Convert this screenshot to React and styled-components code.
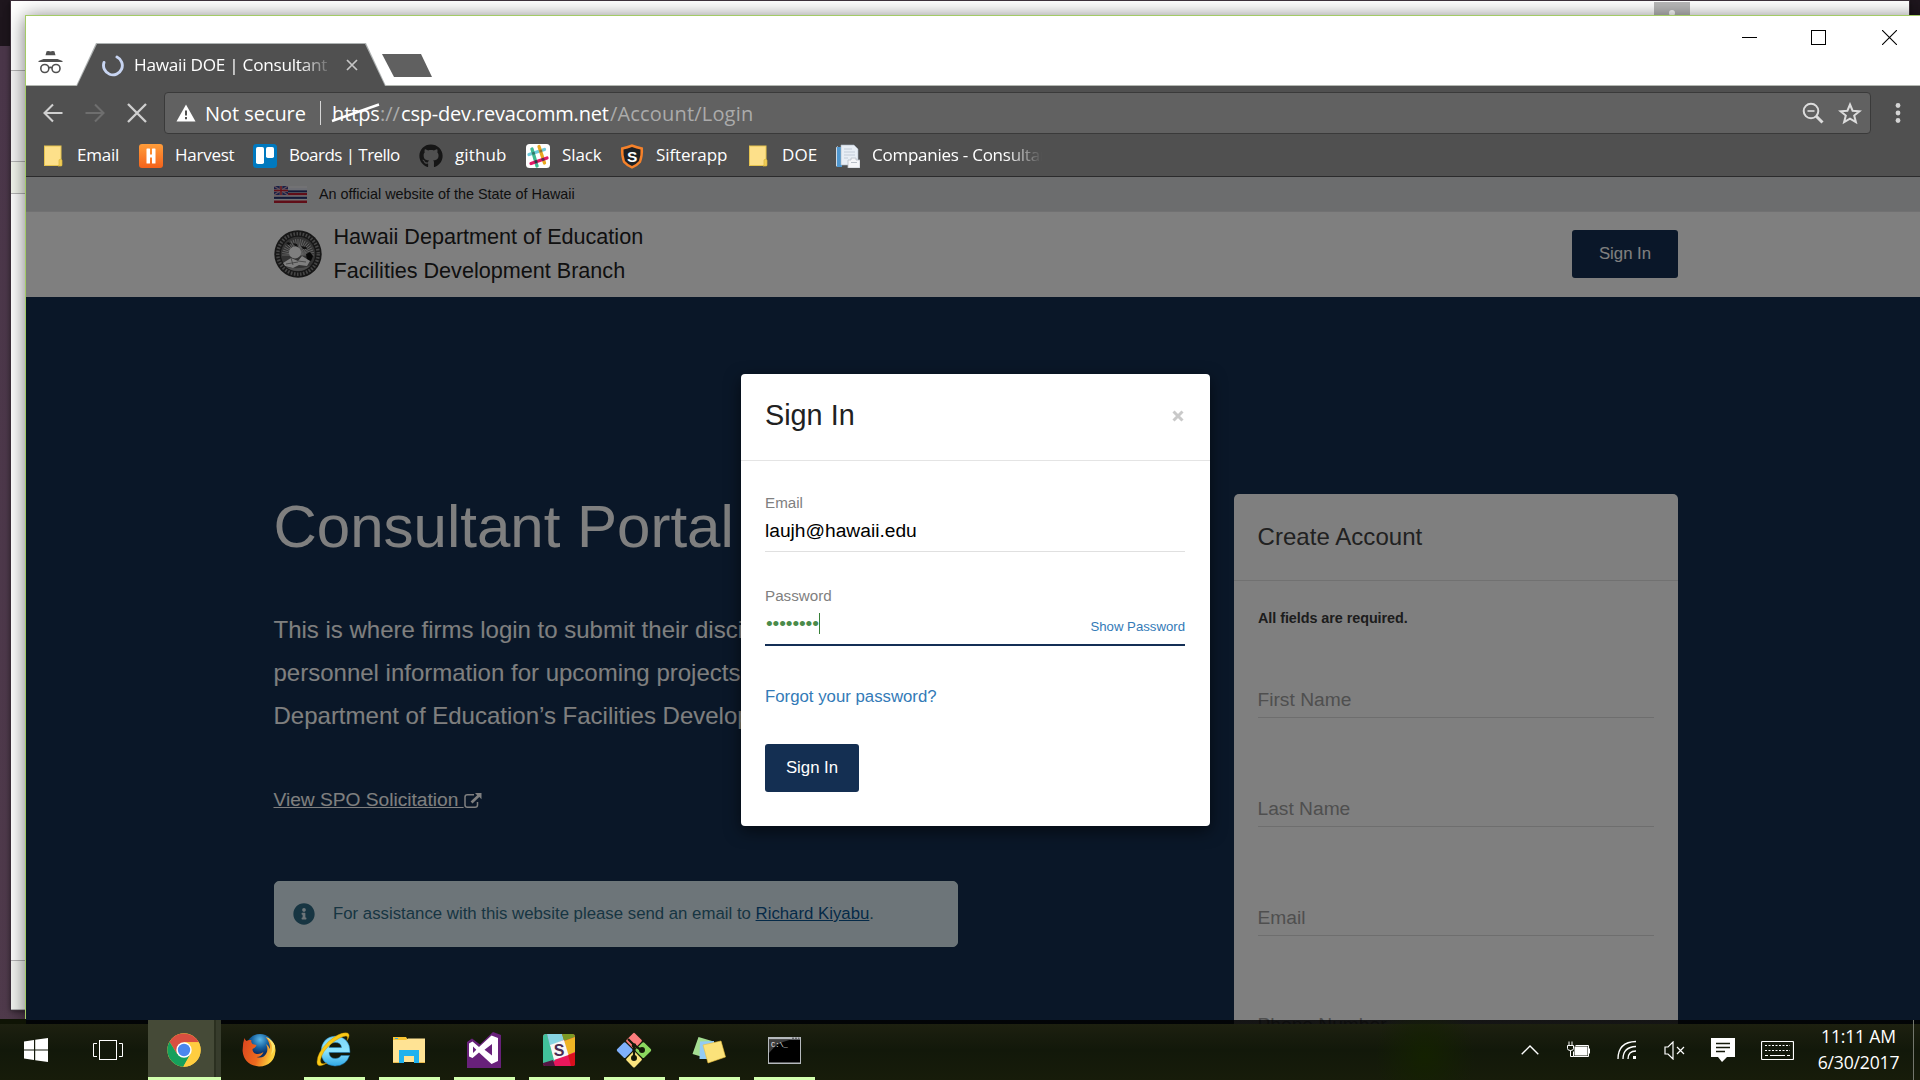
import React from 'react';
import styled, { createGlobalStyle, css } from 'styled-components';
import { FaGithub, FaInfoCircle } from 'react-icons/fa';

const Global = createGlobalStyle`
  * { box-sizing: border-box; }
  html, body { margin: 0; width: 1920px; height: 1080px; overflow: hidden; }
  h1, h2, p { margin: 0; font-weight: 400; }
  svg { display: block; flex: none; }
`;

const arial = css`font-family: "Liberation Sans", Arial, sans-serif;`;
const segoe = css`font-family: "Open Sans", "Noto Sans", sans-serif;`;

/* ---------- Desktop and background window ---------- */
const Desktop = styled.div`
  position: relative;
  width: 1920px;
  height: 1080px;
  overflow: hidden;
  background: linear-gradient(#1e161d 46px, #4b374a 46px, #503b4c);
`;
const BackWindow = styled.div`
  position: absolute;
  left: 11px;
  top: 1px;
  width: 1898px;
  height: 1009px;
  display: flex;
  flex-direction: column;
  background: #fff;
  box-shadow: 0 0 0 1px #3d303b, 0 1px 6px rgba(0, 0, 0, 0.6);
`;
const BackBand = styled.div`
  height: ${(p) => p.$h}px;
  background: ${(p) => p.$bg};
  border-bottom: 1px solid #b5b5b5;
`;
const BackTop = styled(BackBand)`
  display: flex;
  justify-content: flex-end;
  align-items: flex-start;
  padding: 1px 219px 0 0;
`;
const BackAvatar = styled.div`
  width: 36px;
  height: 26px;
  display: flex;
  justify-content: center;
  padding-top: 7px;
  background: #b9b9b9;
`;

/* ---------- Browser window ---------- */
const Window = styled.div`
  position: absolute;
  left: 25px;
  top: 15px;
  width: 1902px;
  height: 1009px;
  display: flex;
  flex-direction: column;
  border: 1px solid #a3cb66;
  border-bottom: 0;
  background: #fff;
  box-shadow: 0 2px 18px rgba(0, 0, 0, 0.55);
`;
const TitleBar = styled.div`
  display: flex;
  height: 70px;
  padding-left: 12px;
  border-bottom: 1px solid #b4b8b2;
`;
const Incognito = styled.div`
  width: 26px;
  margin-right: 12px;
  padding-top: 34px;
`;
const Tab = styled.div`
  width: 311px;
  height: 43px;
  margin-top: 27px;
  padding: 1px;
  background: #aeb2b2;
  clip-path: polygon(20px 0, 290px 0, 310px 100%, 0 100%);
`;
const TabInner = styled.div`
  display: flex;
  align-items: center;
  height: 42px;
  padding-left: 24px;
  background: #505050;
  clip-path: polygon(20px 0, 288px 0, 308px 100%, 0 100%);
`;
const TabTitle = styled.span`
  ${segoe}
  width: 200px;
  margin: 0 12px 0 9px;
  padding-bottom: 1px;
  overflow: hidden;
  white-space: nowrap;
  font-size: 17.2px;
  letter-spacing: -0.26px;
  line-height: 26px;
  color: #fff;
  mask-image: linear-gradient(90deg, #000 165px, transparent 200px);
`;
const NewTab = styled.div`
  width: 50px;
  height: 23px;
  margin: 38px 0 0 -5px;
  background: #606060;
  clip-path: polygon(0 0, 39px 0, 100% 100%, 12px 100%);
`;
const WindowControls = styled.div`
  display: flex;
  gap: 54px;
  margin: 14px 29px 0 auto;
  svg:last-child { margin-left: 2px; }
`;
const Toolbar = styled.div`
  display: flex;
  align-items: center;
  height: 54px;
  padding: 0 24px 0 16px;
  background: #505050;
`;
const NavButtons = styled.div`
  display: flex;
  gap: 20px;
  width: 122px;
  svg:last-child { margin-left: 1px; }
`;
const Omnibox = styled.div`
  ${segoe}
  display: flex;
  align-items: center;
  width: 1707px;
  height: 42px;
  margin-right: 24px;
  padding: 0 8px 0 11px;
  border: 1px solid #3a3a3a;
  border-radius: 4px;
  background: #616161;
  color: #fff;
  font-size: 20px;
  white-space: nowrap;
`;
const NotSecure = styled.span`
  width: 115px;
  margin-left: 9px;
  letter-spacing: -0.05px;
`;
const Divider = styled.span`
  width: 1px;
  height: 24px;
  margin-right: 11px;
  background: #d6d6d6;
`;
const UrlPart = styled.span`
  width: ${(p) => p.$w}px;
  letter-spacing: ${(p) => p.$ls || 0}px;
  color: ${(p) => (p.$dim ? '#ababab' : '#fff')};
`;
const Scheme = styled(UrlPart)`
  position: relative;
  svg { position: absolute; left: -1px; top: 3px; }
`;
const OmniActions = styled.div`
  display: flex;
  gap: 14px;
  margin-left: auto;
`;
const Bookmarks = styled.div`
  ${segoe}
  display: grid;
  grid-template-columns: 98px 114px 166px 107px 94px 126px 90px 210px;
  height: 37px;
  padding: 0 0 4px 15px;
  border-bottom: 1px solid #2b2b2c;
  background: #505050;
`;
const Bookmark = styled.div`
  display: flex;
  align-items: center;
  gap: 12px;
  overflow: hidden;
  white-space: nowrap;
  color: #fff;
  font-size: 17px;
  letter-spacing: ${(p) => p.$ls}px;
  line-height: 24px;
  ${(p) => p.$fade && 'mask-image: linear-gradient(90deg, #000 170px, transparent 206px);'}
  span { padding-bottom: 2px; }
`;

/* ---------- Web page ---------- */
const Page = styled.div`
  ${arial}
  position: relative;
  flex: 1;
  overflow: hidden;
  background: #142f50;
`;
const GovBar = styled.div`
  display: flex;
  align-items: center;
  gap: 12px;
  height: 35px;
  padding: 0 248px;
  border-bottom: 1px solid #e2e3e5;
  background: #d8dadd;
  color: #212121;
  font-size: 14.4px;
`;
const Header = styled.header`
  display: flex;
  justify-content: space-between;
  height: 85px;
  padding: 0 248px;
  background: #fff;
`;
const Brand = styled.div`
  display: flex;
  gap: 11.5px;
  padding-top: 8px;
  color: #212121;
  font-size: 21.6px;
  line-height: 34px;
  svg { margin-top: 10px; }
`;
const Button = styled.button`
  ${arial}
  width: ${(p) => p.$w}px;
  height: 48px;
  margin-top: ${(p) => p.$mt}px;
  padding: 0 0 1px;
  border: 0;
  border-radius: 3px;
  background: #142f52;
  color: #fff;
  font-size: 16.8px;
`;
const Hero = styled.main`
  display: flex;
  justify-content: space-between;
  padding: 197px 248px 0;
`;
const Intro = styled.section`
  width: 684px;
  color: #fff;
`;
const Title = styled.h1`
  margin-left: -0.5px;
  padding-top: 1px;
  font-size: 60px;
  line-height: 64px;
  white-space: nowrap;
`;
const Lead = styled.p`
  margin: 49px 0 0 -0.5px;
  font-size: 24px;
  line-height: 43px;
  white-space: nowrap;
`;
const SpoLink = styled.a`
  display: flex;
  align-items: center;
  margin: 48px 0 0 -0.5px;
  font-size: 19.2px;
  line-height: 30px;
  letter-spacing: -0.02px;
  white-space: pre;
  text-decoration: underline;
`;
const Alert = styled.div`
  display: flex;
  align-items: center;
  gap: 18px;
  height: 66px;
  margin-top: 66px;
  padding: 0 18px;
  border: 1px solid #dbeff2;
  border-radius: 5px;
  background: #dbebf3;
  color: #2f6a84;
  font-size: 16.8px;
  white-space: nowrap;
  a { color: #0b5590; text-decoration: underline; }
`;
const Panel = styled.section`
  width: 444px;
  height: 700px;
  border-radius: 5px;
  background: #fff;
`;
const PanelHead = styled.h2`
  height: 87px;
  padding: 0 23.5px;
  border-bottom: 1px solid #e3e3e3;
  color: #424242;
  font-size: 24px;
  letter-spacing: 0.05px;
  line-height: 86px;
`;
const PanelBody = styled.div`
  padding: 27px 24px 0;
`;
const Note = styled.p`
  margin-bottom: 59px;
  color: #3a3a3a;
  font-size: 14.4px;
  font-weight: 700;
  letter-spacing: -0.06px;
  line-height: 20px;
`;
const Field = styled.div`
  height: 31px;
  margin-bottom: 78px;
  border-bottom: 1px solid #dcdcdc;
  color: #9e9e9e;
  font-size: 19.2px;
  line-height: 26px;
  text-indent: -0.5px;
  &:last-child { line-height: 22px; }
`;
const Backdrop = styled.div`
  position: absolute;
  inset: 0;
  background: rgba(0, 0, 0, 0.5);
`;
const Dialog = styled.div`
  position: absolute;
  left: 715px;
  top: 197px;
  width: 469px;
  height: 452px;
  border-radius: 4px;
  background: #fff;
  box-shadow: 0 5px 16px rgba(0, 0, 0, 0.55);
`;
const DialogHead = styled.div`
  display: flex;
  align-items: center;
  justify-content: space-between;
  height: 87px;
  padding: 0 26px 3px 24px;
  border-bottom: 1px solid #e4e4e4;
  color: #212121;
  font-size: 28.8px;
`;
const DialogBody = styled.div`
  padding: 32px 25px 0 24px;
`;
const Label = styled.div`
  margin-bottom: 5px;
  color: #808080;
  font-size: 15.2px;
  line-height: 20px;
`;
const Value = styled.div`
  display: flex;
  justify-content: space-between;
  height: ${(p) => (p.$focus ? 35 : 34)}px;
  margin-bottom: ${(p) => (p.$focus ? 39 : 34)}px;
  border-bottom: ${(p) => (p.$focus ? '2px solid #142f56' : '1px solid #e0e0e0')};
  color: ${(p) => (p.$focus ? '#4a8b4a' : '#000')};
  font-size: 19.2px;
  line-height: 26px;
`;
const Secret = styled.span`
  height: 21px;
  margin: 2px 0 0 1px;
  border-right: 1px solid #388038;
  font-size: 19.2px;
  letter-spacing: -0.12px;
  line-height: 21px;
`;
const ShowLink = styled.a`
  padding-top: 4px;
  color: #337ab7;
  font-size: 13.2px;
  line-height: 24px;
`;
const ForgotLink = styled.a`
  display: block;
  color: #337ab7;
  font-size: 16.8px;
  line-height: 24px;
`;

/* ---------- Taskbar ---------- */
const Taskbar = styled.div`
  position: absolute;
  left: 0;
  bottom: 0;
  width: 1920px;
  height: 60px;
  display: flex;
  background:
    radial-gradient(50px 60px at 1425px 36px, rgba(20, 34, 0, 0.9), transparent) no-repeat,
    linear-gradient(rgba(0, 0, 0, 0.84) 4px, transparent 4px),
    linear-gradient(transparent 4px, #1d2010 4px, #12180a 30px, #171c0a);
`;
const TaskbarCorner = styled.div`
  position: absolute;
  left: 0;
  top: -1px;
  width: 26px;
  height: 5px;
  background: #0f1405;
`;
const Task = styled.div`
  display: flex;
  align-items: center;
  justify-content: center;
  width: ${(p) => p.$w || 75}px;
  height: 60px;
  padding-right: ${(p) => p.$shift || 0}px;
`;
const OpenTask = styled(Task)`
  background: linear-gradient(#d2ffae, #d2ffae) center bottom / 61px 3px no-repeat;
`;
const ActiveTask = styled(Task)`
  padding-right: 1px;
  border-bottom: 3px solid #d2ffae;
  padding-top: 3px;
  background: linear-gradient(90deg, #454a37 66px, #2b3020 66px, #2b3020 68px, #373c2c 68px);
`;
const Tray = styled.div`
  display: flex;
  align-items: center;
  margin-left: auto;
`;
const TrayIcon = styled.div`
  display: flex;
  justify-content: center;
  width: ${(p) => p.$w}px;
`;
const Clock = styled.div`
  ${segoe}
  width: 106px;
  padding: 0 3px 2px 0;
  text-align: center;
  color: #fff;
  font-size: 17.6px;
  letter-spacing: -0.2px;
  line-height: 26px;
`;
const ShowDesktop = styled.div`
  width: 7px;
  height: 60px;
  border-left: 1px solid #73766c;
`;

/* ---------- Icons ---------- */
const IncognitoIcon = () => (
  <svg width="25" height="24" viewBox="0 0 25 24">
    <path d="M7.500 5.200 8.600 1.200 10.500 1l2 .6 2-.6 1.900.2 1.100 4z" fill="#505050" />
    <path d="M5.500 9h14l5 2v1H.5v-1z" fill="#505050" />
    <g fill="none" stroke="#505050" strokeWidth="1.6">
      <circle cx="6.800" cy="18.500" r="4" /><circle cx="18" cy="18.500" r="4" /><path d="M10.800 18q1.600-1.400 3.200 0" />
    </g>
  </svg>
);
const Spinner = () => (
  <svg width="24" height="24" viewBox="0 0 24 24">
    <path d="M3 9.500A9.400 9.400 0 1 0 16 4" fill="none" stroke="#c8d5f2" strokeWidth="2.9" strokeLinecap="round" />
  </svg>
);
const Cross = ({ size, color, w, pad = 1 }) => (
  <svg width={size} height={size} viewBox={`0 0 ${size} ${size}`}>
    <path d={`M${pad} ${pad}L${size - pad} ${size - pad}M${size - pad} ${pad}L${pad} ${size - pad}`} stroke={color} strokeWidth={w} />
  </svg>
);
const Arrow = ({ color, flip }) => (
  <svg width="22" height="20" viewBox="0 0 22 20" transform={flip ? 'scale(-1 1)' : undefined}>
    <path d="M20.500 10H2.500M11 1.500 2.500 10l8.500 8.500" fill="none" stroke={color} strokeWidth="2.100" />
  </svg>
);
const FolderIcon = () => (
  <svg width="24" height="24" viewBox="0 0 24 24">
    <path d="M3 1.500h17.500V15L21 22H3z" fill="#e6c44f" />
    <path d="M4 2.500h15.500V16H18v5H4z" fill="#fde08a" />
    <path d="M18 16.500q0-1.200 1.300-1.200T21 16.500V21q0 1-1 1h-3q1 0 1-1.500z" fill="#f1cd57" stroke="#d9b43c" strokeWidth=".7" />
  </svg>
);
const HarvestIcon = () => (
  <svg width="24" height="24" viewBox="0 0 24 24">
    <defs><linearGradient id="hv" x2="0" y2="1"><stop stopColor="#ff9d3a" /><stop offset="1" stopColor="#f4621b" /></linearGradient></defs>
    <rect width="24" height="24" rx="3" fill="url(#hv)" />
    <g fill="#fff"><rect x="7.500" y="4.500" width="3.500" height="15" rx=".6" /><rect x="13" y="4.500" width="3.500" height="15" rx=".6" /><rect x="9" y="10.500" width="6" height="3" /></g>
  </svg>
);
const TrelloIcon = () => (
  <svg width="24" height="24" viewBox="0 0 24 24">
    <rect width="24" height="24" rx="3.500" fill="#0079bf" />
    <rect x="3" y="3" width="8" height="17" rx="1.800" fill="#fff" /><rect x="13" y="3" width="8" height="11" rx="1.800" fill="#fff" />
  </svg>
);
const SlackIcon = () => (
  <svg width="24" height="24" viewBox="0 0 24 24">
    <rect width="24" height="24" rx="3.500" fill="#fff" />
    <g strokeWidth="3.300" strokeLinecap="round">
      <path d="M3 10.500 18.500 5.500" stroke="#6ecadc" /><path d="M6 5 11 22" stroke="#3eb991" />
      <path d="M13 2.500 18.500 19" stroke="#e9a820" /><path d="M5 19.500 21 14" stroke="#e01765" />
    </g>
    <g fill="#2a3a45"><circle cx="7.500" cy="9.300" r="1.500" opacity=".5" /><circle cx="14.800" cy="7" r="1.500" opacity=".45" /><circle cx="10" cy="17.700" r="1.600" /><circle cx="17" cy="15.300" r="1.600" opacity=".7" /></g>
  </svg>
);
const SifterIcon = () => (
  <svg width="24" height="25" viewBox="0 0 24 25">
    <path d="M12 .3Q17 2 23 3.500 23.500 12 21 18.500 17 23 12 24.700 7 23 3 18.500.500 12 1 3.500 7 2 12 .3z" fill="#f5812a" />
    <path d="M12 3q4.500 1.700 8.500 2.500.5 6-1.500 11.500-3 3.500-7 5-4-1.500-7-5Q3 11.500 3.500 5.500 7.500 4.700 12 3z" fill="#1d2024" />
    <text x="12" y="18" textAnchor="middle" fontFamily="Liberation Sans" fontWeight="700" fontSize="15.500" fill="#fff">S</text>
  </svg>
);
const PageIcon = () => (
  <svg width="24" height="24" viewBox="0 0 24 24">
    <path d="M0 3.500 2 2v20l-2 .500z" fill="#cfd9e3" /><path d="M1 3h5v20H1z" fill="#4f97cf" />
    <path d="M5 1h13l4 4v16H5z" fill="#e8eef5" stroke="#aab6c3" strokeWidth=".6" />
    <path d="M8 5h8M8 8h11M8 11h11M8 14h4" stroke="#c2ccd8" /><path d="M12 16h3v-2h5v2h4v8H12z" fill="#f5f6f8" stroke="#b9bfc7" strokeWidth=".8" />
    <path d="M15 18.500h6" stroke="#b9bfc7" />
  </svg>
);
const Flag = () => (
  <svg width="33" height="17" viewBox="0 0 33 17">
    <rect width="33" height="17" fill="#e4e4e8" />
    <g fill="#27336e"><rect y="4.200" width="33" height="2.200" /><rect y="10.700" width="33" height="2.200" /></g>
    <g fill="#c01c30"><rect y="2" x="13" width="20" height="2.200" fill="#d9dbe6" /><rect y="7" width="33" height="2.200" /><rect y="14.500" width="33" height="2.500" /></g>
    <rect width="14" height="9" fill="#33408c" />
    <path d="M0 0 14 9M14 0 0 9" stroke="#c9a4b8" strokeWidth="1.300" />
    <path d="M7 0v9M0 4.500h14" stroke="#e0c8d2" strokeWidth="2.600" /><path d="M7 0v9M0 4.500h14" stroke="#c8202f" strokeWidth="1.500" />
  </svg>
);
const Seal = () => (
  <svg width="48" height="48" viewBox="0 0 48 48">
    <circle cx="24" cy="24" r="23.700" fill="#2e2e2e" />
    <circle cx="24" cy="24" r="20.200" fill="none" stroke="#8a8a8a" strokeWidth="3.400" strokeDasharray="1.600 1.500" />
    <circle cx="24" cy="24" r="17.200" fill="#666" />
    <g stroke="#c4c4c4" strokeWidth="1">
      {Array.from({ length: 21 }, (_, i) => {
        const a = Math.PI + (i * Math.PI) / 20;
        return <path key={i} d={`M24 25L${24 + 16 * Math.cos(a)} ${25 + 16 * Math.sin(a)}`} />;
      })}
    </g>
    <path d="m12 13 3-1 2 2-3 1zM19 13l4 1 1 3-3-1zM27 16l5 1 1 2-4 0z" fill="#222" />
    <circle cx="21" cy="22.500" r="6" fill="#fff" />
    <path d="m32 24 4-2 3 4-2 5-4-1z" fill="#111" />
    <path d="m9 33 8-5 7 3 4-5 8 5-3 5-8-1-6 3-8-2z" fill="#fff" />
    <path d="m17 28 2 7M24 31l8 1M12 34l12-2" stroke="#777" strokeWidth=".8" />
    <path d="M12 37q12 3 24-1-5 5-12 5t-12-4z" fill="#999" />
  </svg>
);
const ExternalIcon = () => (
  <svg width="18" height="17" viewBox="0 0 18 17">
    <path d="M10 2.800H3.500Q1 2.800 1 5v8q0 2.300 2.500 2.300H11q2.500 0 2.500-2.300V10" fill="none" stroke="#fff" strokeWidth="1.500" />
    <path d="M11 1h6.500v6.200l-2.200-2.200-6.800 6.400-1.900-1.900 6.600-6.300z" fill="#fff" />
  </svg>
);
const StartIcon = () => (
  <svg width="24" height="24" viewBox="0 0 24 24" fill="#fff"><path d="M0 3.400 10 2v9.400H0zM11.200 1.800 24 0v11.400H11.200zM0 12.500h10V22L0 20.600zM11.200 12.500H24V24l-12.800-1.800z" /></svg>
);
const TaskViewIcon = () => (
  <svg width="30" height="20" viewBox="0 0 30 20" fill="none" stroke="#fff" strokeWidth="1">
    <rect x="6.500" y=".5" width="17" height="19" /><path d="M4 3.500H.5v13H4M26 3.500h3.500v13H26" />
  </svg>
);
const ChromeIcon = () => (
  <svg width="34" height="34" viewBox="0 0 34 34">
    <circle cx="17" cy="17" r="16.700" fill="#ffcd40" />
    <path d="M2.500 8.700A16.700 16.700 0 0 1 31.700 9.300H17l-6.800 11.600z" fill="#d94f40" />
    <path d="M2.500 8.700A16.700 16.700 0 0 0 16.300 33.700l7.300-12.900-13.400.2z" fill="#15a05c" />
    <path d="M17 9.300h14.700A16.700 16.700 0 0 1 16.300 33.700l7.400-12.900z" fill="#ffcd40" />
    <circle cx="17" cy="17" r="7.700" fill="#fff" /><circle cx="17" cy="17" r="6.200" fill="#4a87ee" />
  </svg>
);
const FirefoxIcon = () => (
  <svg width="34" height="34" viewBox="0 0 34 34">
    <defs>
      <radialGradient id="ffb" cx=".5" cy=".2"><stop stopColor="#5cb8e8" /><stop offset=".6" stopColor="#14609f" /><stop offset="1" stopColor="#0d2f66" /></radialGradient>
      <linearGradient id="ffo" x2="1" y2=".3"><stop stopColor="#d9431f" /><stop offset=".6" stopColor="#ee6a1e" /><stop offset="1" stopColor="#fbd03c" /></linearGradient>
    </defs>
    <circle cx="18" cy="15" r="14" fill="url(#ffb)" />
    <path d="M2.500 5q.5 2 2 3 2-1.500 5-1-1 2 1 4l4 1q0 2-4 4 0 4 4 5 4 .5 7-2-2 5-7 5 7 2 10-4 2-4-.5-9 3 2 4 5 0-7-4.500-12Q34 8 33.500 18 32 33 17 33.500 2 32 .6 18 .5 10 2.500 5z" fill="url(#ffo)" />
    <path d="M24 4q9 7 5 18 4-5 4-9-3-7-9-9z" fill="#fde56a" />
  </svg>
);
const IeIcon = () => (
  <svg width="36" height="36" viewBox="0 0 36 36">
    <defs><linearGradient id="ie" x2="0" y2="1"><stop stopColor="#7ad5f8" /><stop offset=".5" stopColor="#8ee4ff" /><stop offset="1" stopColor="#2fa9e6" /></linearGradient></defs>
    <path d="M34 20.500H13q.5 6 6.500 6 4 0 5.500-3h8.500Q30 34 19 34 5 33 5 19 6 5 19.500 4 34 5 34 20.500zM13 15.500h12.500Q25 10.500 19.300 10.500T13 15.500z" fill="url(#ie)" stroke="#1c7bb8" strokeWidth=".5" />
    <path d="M31 8.500Q35 2.500 31.500 1 24-.5 12 10 1 21 1 30q0 7 10 1-7 2.500-6.500-3Q6 19.500 15 12 24 4.500 30 4q2.500 0 1 4.500z" fill="#f9c916" stroke="#c48d00" strokeWidth=".4" />
  </svg>
);
const ExplorerIcon = () => (
  <svg width="34" height="28" viewBox="0 0 34 28">
    <path d="M1 1h13l2 3H1z" fill="#f7c433" /><path d="M1 4h13l2-1.500h17V26H1z" fill="#ffe394" /><path d="M3 2h3v1H3z" fill="#3aa7df" />
    <path d="M7 14h20v13h-5v-7H12v7H7z" fill="#1fb2ee" /><path d="M1 26h6v1H1zM27 26h6v1h-6z" fill="#e8bb4e" />
  </svg>
);
const VsIcon = () => (
  <svg width="34" height="36" viewBox="0 0 34 36">
    <path d="M0 10 5 6.500l8 6L26 0l8 3v33H0z" fill="#68217a" />
    <path d="M2 11.500 5.500 9.500 12 15 24.500 3.500 31 6v23l-6.500 3L12 20.500 5.500 26 2 24.500zM6 14.500v6.500l3.300-3.300zM25 12l-7.500 5.800L25 23.500z" fill="#fff" fillRule="evenodd" />
  </svg>
);
const SlackTaskIcon = () => (
  <svg width="32" height="32" viewBox="0 0 32 32">
    <defs><clipPath id="sc"><rect width="32" height="32" rx="2.500" /></clipPath></defs>
    <g clipPath="url(#sc)">
      <rect width="32" height="32" fill="#e8175d" />
      <path d="M0 0h4l8 27-12 3z" fill="#41c09b" /><path d="M4 0h15l2 6-14 6z" fill="#87d4e2" /><path d="M19 0h13v3l-11 4z" fill="#7b9a25" />
      <path d="m21 7 11-4v15l-7 3z" fill="#efb424" /><path d="m25 21 7-2v13h-4z" fill="#d9101c" /><path d="m0 29 10-3 2 6H0z" fill="#531745" />
      <path d="m7 11 14-5 4.500 15L11 26z" fill="#f7f7f7" />
      <text x="16" y="22" textAnchor="middle" fontFamily="Liberation Sans" fontWeight="700" fontSize="16" fill="#4a2a50">S</text>
    </g>
  </svg>
);
const GitIcon = () => (
  <svg width="36" height="36" viewBox="0 0 36 36">
    <g transform="rotate(45 18 18)">
      <rect x="5.500" y="5.500" width="12" height="12" rx="1.500" fill="#fc7d7d" /><rect x="18.700" y="5.500" width="12" height="12" rx="1.500" fill="#8bd85f" />
      <rect x="5.500" y="18.700" width="12" height="12" rx="1.500" fill="#7fb0fb" /><rect x="18.700" y="18.700" width="12" height="12" rx="1.500" fill="#fbe47e" />
    </g>
    <g stroke="#15190a" strokeWidth="2.200" fill="#15190a"><path d="M12 7 18 13v12M18 13l7 5" fill="none" /><circle cx="18" cy="26" r="1.900" /><circle cx="26" cy="18" r="1.900" /><circle cx="18" cy="13.500" r="1.200" /></g>
  </svg>
);
const NotesIcon = () => (
  <svg width="34" height="28" viewBox="0 0 34 28">
    <path d="M6.500 1 20 5l-6 17L.5 18z" fill="#a4dd92" /><path d="M8 5.500 22 5v18H7.500z" fill="#93cbf5" />
    <path d="m11 9 18-4 4.500 16-17.500 6z" fill="#fbe27a" stroke="#e9bf3c" strokeWidth=".6" />
  </svg>
);
const CmdIcon = () => (
  <svg width="33" height="27" viewBox="0 0 33 27">
    <rect width="33" height="27" fill="#b5b9bd" /><rect x="1" y="2.500" width="31" height="23" fill="#000" /><path d="M1 2.500h22Q8 6 1 16z" fill="#3c3c3c" />
    <path d="M24 1.200h2M27 1.200h2M30 1.200h1.500" stroke="#444" />
    <text x="3" y="10" fontFamily="Liberation Mono" fontSize="7" fill="#eee">C:\_</text>
  </svg>
);

const bookmarks = [
  ['Email', <FolderIcon />, -0.2],
  ['Harvest', <HarvestIcon />, -0.25],
  ['Boards | Trello', <TrelloIcon />, -0.55],
  ['github', <FaGithub size={24} color="#161616" />, 0.1],
  ['Slack', <SlackIcon />, -0.1],
  ['Sifterapp', <SifterIcon />, -0.1],
  ['DOE', <FolderIcon />, 0.1],
  ['Companies - Consultant', <PageIcon />, -0.25],
];
const openTasks = [<IeIcon />, <ExplorerIcon />, <VsIcon />, <SlackTaskIcon />, <GitIcon />, <NotesIcon />, <CmdIcon />];

function Browser() {
  return (
    <Window>
      <TitleBar>
        <Incognito><IncognitoIcon /></Incognito>
        <Tab>
          <TabInner>
            <Spinner />
            <TabTitle>Hawaii DOE | Consultant</TabTitle>
            <Cross size={12} color="#c6c6c6" w={1.7} />
          </TabInner>
        </Tab>
        <NewTab />
        <WindowControls>
          <svg width="15" height="15" viewBox="0 0 15 15"><path d="M0 7.500h15" stroke="#000" /></svg>
          <svg width="15" height="15" viewBox="0 0 15 15"><rect x=".5" y=".5" width="14" height="14" fill="none" stroke="#000" /></svg>
          <Cross size={15} color="#000" w={1.1} pad={0} />
        </WindowControls>
      </TitleBar>
      <Toolbar>
        <NavButtons>
          <Arrow color="#d0d0d0" />
          <Arrow color="#6e6e6e" flip />
          <Cross size={20} color="#d0d0d0" w={2.3} />
        </NavButtons>
        <Omnibox>
          <svg width="20" height="18" viewBox="0 0 20 18"><path d="M10 .5 19.500 17.500H.5z" fill="#fff" /><path d="M10 6.500v5M10 13v2.200" stroke="#505050" strokeWidth="2" /></svg>
          <NotSecure>Not secure</NotSecure>
          <Divider />
          <Scheme $w={48} $ls={-0.1}>
            https
            <svg width="52" height="24" viewBox="0 0 52 24"><path d="M1 18 48 1.500" stroke="#fff" strokeWidth="2.400" /></svg>
          </Scheme>
          <UrlPart $w={21} $dim>://</UrlPart>
          <UrlPart $w={209} $ls={-0.19}>csp-dev.revacomm.net</UrlPart>
          <UrlPart $w={150} $ls={0.18} $dim>/Account/Login</UrlPart>
          <OmniActions>
            <svg width="22" height="22" viewBox="0 0 22 22" fill="none" stroke="#dcdcdc"><circle cx="9" cy="9" r="7.300" strokeWidth="2" /><path d="M5.500 9h7" strokeWidth="1.600" /><path d="m14 14 6.500 6.500" strokeWidth="3" /></svg>
            <svg width="24" height="23" viewBox="0 0 24 23"><path d="m12 2.500 2.600 6.200 6.900.5-5.300 4.400 1.700 6.600-5.900-3.600-5.900 3.600 1.700-6.600L2.500 9.200l6.900-.5z" fill="none" stroke="#dcdcdc" strokeWidth="2" /></svg>
          </OmniActions>
        </Omnibox>
        <svg width="6" height="22" viewBox="0 0 6 22" fill="#d4d4d4"><circle cx="3" cy="3.500" r="2.400" /><circle cx="3" cy="11" r="2.400" /><circle cx="3" cy="18.500" r="2.400" /></svg>
      </Toolbar>
      <Bookmarks>
        {bookmarks.map(([name, icon, ls]) => (
          <Bookmark key={name} $ls={ls} $fade={name.startsWith('Comp')}>{icon}<span>{name}</span></Bookmark>
        ))}
      </Bookmarks>
      <Page>
        <GovBar><Flag />An official website of the State of Hawaii</GovBar>
        <Header>
          <Brand><Seal /><span>Hawaii Department of Education<br />Facilities Development Branch</span></Brand>
          <Button $w={106} $mt={18}>Sign In</Button>
        </Header>
        <Hero>
          <Intro>
            <Title>Consultant Portal</Title>
            <Lead>
              This is where firms login to submit their discipline and<br />
              personnel information for upcoming projects with the<br />
              Department of Education’s Facilities Development
            </Lead>
            <SpoLink>View SPO Solicitation <ExternalIcon /></SpoLink>
            <Alert>
              <FaInfoCircle size={22} />
              <span>For assistance with this website please send an email to <a>Richard Kiyabu</a>.</span>
            </Alert>
          </Intro>
          <Panel>
            <PanelHead>Create Account</PanelHead>
            <PanelBody>
              <Note>All fields are required.</Note>
              {['First Name', 'Last Name', 'Email', 'Phone Number'].map((f) => <Field key={f}>{f}</Field>)}
            </PanelBody>
          </Panel>
        </Hero>
        <Backdrop />
        <Dialog>
          <DialogHead>Sign In<Cross size={12} color="#c9c9c9" w={3} pad={1.5} /></DialogHead>
          <DialogBody>
            <Label>Email</Label>
            <Value>laujh@hawaii.edu</Value>
            <Label>Password</Label>
            <Value $focus><Secret>••••••••</Secret><ShowLink>Show Password</ShowLink></Value>
            <ForgotLink>Forgot your password?</ForgotLink>
            <Button $w={94} $mt={35}>Sign In</Button>
          </DialogBody>
        </Dialog>
      </Page>
    </Window>
  );
}

export default function App() {
  return (
    <Desktop>
      <Global />
      <BackWindow>
        <BackTop $h={70} $bg="#fff">
          <BackAvatar><svg width="8" height="8" viewBox="0 0 8 8"><circle cx="4" cy="4" r="3" fill="#fff" /></svg></BackAvatar>
        </BackTop>
        <BackBand $h={91} $bg="#f6f6f6" />
        <BackBand $h={32} $bg="#f4f7ee" />
        <BackBand $h={767} $bg="#fff" />
        <BackBand $h={49} $bg="#f4f6f2" />
      </BackWindow>
      <Browser />
      <Taskbar>
        <TaskbarCorner />
        <Task $w={72}><StartIcon /></Task>
        <Task $w={76} $shift={4}><TaskViewIcon /></Task>
        <ActiveTask $w={73}><ChromeIcon /></ActiveTask>
        <Task $w={76}><FirefoxIcon /></Task>
        {openTasks.map((icon, i) => <OpenTask key={i} $shift={1}>{icon}</OpenTask>)}
        <Tray>
          <TrayIcon $w={48}><svg width="18" height="10" viewBox="0 0 18 10"><path d="m.7 9.300 8.300-8.300 8.300 8.300" fill="none" stroke="#fff" strokeWidth="1.400" /></svg></TrayIcon>
          <TrayIcon $w={48}>
            <svg width="25" height="18" viewBox="0 0 25 18" fill="none" stroke="#fff"><path d="M1.500 4.500h6v3q0 2-3 2t-3-2zM3 .5v4M6 .5v4M4.500 9.500v6h3" /><path d="M9.500 4.500h13v11h-15v-5" /><rect x="9" y="6" width="12" height="8" fill="#fff" /><path d="M23.500 7.500v5" /></svg>
          </TrayIcon>
          <TrayIcon $w={49}>
            <svg width="20" height="20" viewBox="0 0 20 20" fill="none" stroke="#fff" strokeWidth="1.300"><path d="M1 19Q1 2 19 1.500M6 19Q6 7 19 6.500M11 19q0-8 8-8" /><rect x="16" y="16" width="3" height="3" fill="#fff" stroke="none" /></svg>
          </TrayIcon>
          <TrayIcon $w={46}>
            <svg width="21" height="19" viewBox="0 0 21 19" fill="none" stroke="#fff" strokeWidth="1.200"><path d="M1 6h3l5-5v17l-5-5H1zM13 6l7 7M20 6l-7 7" /></svg>
          </TrayIcon>
          <TrayIcon $w={51}>
            <svg width="24" height="24" viewBox="0 0 24 24"><path d="M0 0h24v19h-8l-5 5-4-5H0z" fill="#fff" /><path d="M5 5.500h14M5 9.500h14M5 13.500h9" stroke="#14190a" strokeWidth="1.300" /></svg>
          </TrayIcon>
          <TrayIcon $w={59}>
            <svg width="33" height="19" viewBox="0 0 33 19" fill="none" stroke="#fff"><rect x=".5" y=".5" width="32" height="18" rx="1" strokeWidth="1.200" /><path d="M4 4.500h25M4 9.500h25" strokeDasharray="2 1.500" /><path d="M4 14.500h3M9 14.500h15M26 14.500h3" /></svg>
          </TrayIcon>
          <Clock>11:11 AM<br />6/30/2017</Clock>
          <ShowDesktop />
        </Tray>
      </Taskbar>
    </Desktop>
  );
}
